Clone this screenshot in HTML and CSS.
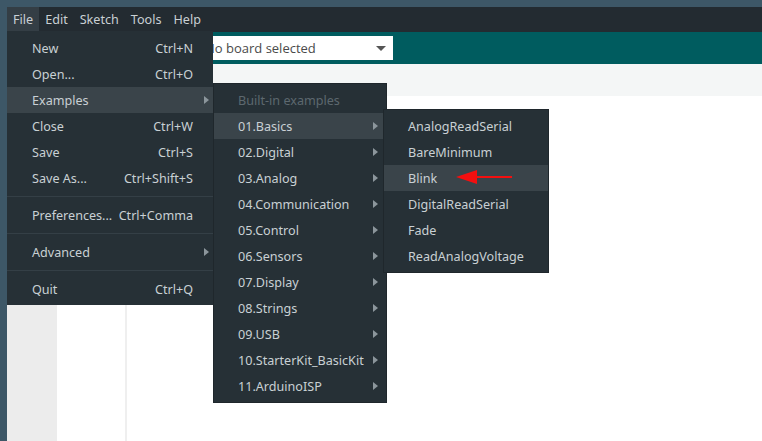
FILE: index.html
```html
<!DOCTYPE html>
<html>
<head>
<meta charset="utf-8">
<link rel="stylesheet" href="styles.css">
</head>
<body>
<div class="desk">
  <div class="window">
    <div class="menubar">
      <span class="mb-item active">File</span>
      <span class="mb-item">Edit</span>
      <span class="mb-item">Sketch</span>
      <span class="mb-item">Tools</span>
      <span class="mb-item">Help</span>
    </div>
    <div class="toolbar">
      <div class="board"><span class="board-text">No board selected</span><span class="caret"></span></div>
    </div>
    <div class="tabs"></div>
    <div class="editor">
      <div class="gutter"></div>
      <div class="fold"></div>
      <div class="divider"></div>
      <div class="code"></div>
    </div>
  </div>

  <div class="menu file-menu">
    <div class="row"><span>New</span><span class="key">Ctrl+N</span></div>
    <div class="row"><span>Open...</span><span class="key">Ctrl+O</span></div>
    <div class="row hl sub"><span>Examples</span></div>
    <div class="row"><span>Close</span><span class="key">Ctrl+W</span></div>
    <div class="row"><span>Save</span><span class="key">Ctrl+S</span></div>
    <div class="row"><span>Save As...</span><span class="key">Ctrl+Shift+S</span></div>
    <div class="sep"></div>
    <div class="row"><span>Preferences...</span><span class="key">Ctrl+Comma</span></div>
    <div class="sep"></div>
    <div class="row sub"><span>Advanced</span></div>
    <div class="sep"></div>
    <div class="row"><span>Quit</span><span class="key">Ctrl+Q</span></div>
  </div>

  <div class="menu ex-menu">
    <div class="row disabled"><span>Built-in examples</span></div>
    <div class="row hl sub"><span>01.Basics</span></div>
    <div class="row sub"><span>02.Digital</span></div>
    <div class="row sub"><span>03.Analog</span></div>
    <div class="row sub"><span>04.Communication</span></div>
    <div class="row sub"><span>05.Control</span></div>
    <div class="row sub"><span>06.Sensors</span></div>
    <div class="row sub"><span>07.Display</span></div>
    <div class="row sub"><span>08.Strings</span></div>
    <div class="row sub"><span>09.USB</span></div>
    <div class="row sub"><span>10.StarterKit_BasicKit</span></div>
    <div class="row sub"><span>11.ArduinoISP</span></div>
  </div>

  <div class="menu basics-menu">
    <div class="row"><span>AnalogReadSerial</span></div>
    <div class="row"><span>BareMinimum</span></div>
    <div class="row hl"><span>Blink</span></div>
    <div class="row"><span>DigitalReadSerial</span></div>
    <div class="row"><span>Fade</span></div>
    <div class="row"><span>ReadAnalogVoltage</span></div>
  </div>

  <svg class="pointer" width="60" height="16" viewBox="0 0 60 16">
    <polygon points="0,8 21,1 21,15" fill="#f40f0f"/>
    <rect x="20" y="7" width="36" height="2" fill="#f40f0f"/>
  </svg>
</div>
</body>
</html>
```
FILE: styles.css
```css
* { box-sizing: border-box; }
html, body { margin: 0; padding: 0; }
body {
  width: 762px;
  height: 441px;
  overflow: hidden;
  font-family: "Noto Sans", "Open Sans", sans-serif;
  font-size: 12.6px;
}
.desk {
  position: relative;
  width: 762px;
  height: 441px;
  background: #3d5767;
  padding: 7px 0 0 7px;
}
.window {
  display: flex;
  flex-direction: column;
  height: 434px;
  background: #fff;
}
.menubar {
  height: 25px;
  background: #232b31;
  display: flex;
  align-items: flex-start;
  color: #c9d0d4;
}
.mb-item {
  height: 24px;
  line-height: 23px;
  padding: 1px 6px 0;
}
.mb-item.active { background: #343e45; }
.toolbar {
  height: 32px;
  background: #005c5f;
  display: flex;
  align-items: flex-start;
  padding-top: 4px;
}
.board {
  margin-left: 189px;
  width: 197px;
  height: 24px;
  background: #fff;
  display: flex;
  align-items: center;
  justify-content: space-between;
  padding: 0 7px 0 9px;
  font-family: "Open Sans", "Noto Sans", sans-serif;
  font-size: 13px;
  color: #4a4a4a;
}
.caret {
  width: 0; height: 0;
  border-left: 5px solid transparent;
  border-right: 5px solid transparent;
  border-top: 5px solid #555;
  margin-top: 1px;
}
.tabs {
  height: 32px;
  background: #f4f6f6;
}
.editor {
  flex: 1;
  display: flex;
}
.gutter { width: 50px; background: #ececec; }
.fold { width: 68px; background: #fff; }
.divider { width: 2px; background: #efefef; }
.code { flex: 1; background: #fff; }

.menu {
  position: absolute;
  background: #263036;
  color: #c9d0d4;
  padding: 4px 0 3px;
}
.row {
  position: relative;
  height: 26px;
  line-height: 24px;
  display: flex;
  align-items: flex-start;
  justify-content: space-between;
  padding: 2px 20px 0 25px;
  white-space: nowrap;
}
.row.hl { background: #3a444a; }
.row.disabled { color: #5d686f; }
.row.sub::after {
  content: "";
  position: absolute;
  top: 9px;
  width: 0; height: 0;
  border-top: 4px solid transparent;
  border-bottom: 4px solid transparent;
  border-left: 5px solid #8c969c;
}
.sep {
  height: 1px;
  margin: 5px 0;
  background: #343f46;
}
.file-menu {
  left: 7px;
  top: 31px;
  width: 206px;
}
.file-menu .row.sub::after { right: 4px; }
.ex-menu {
  left: 213px;
  top: 83px;
  width: 174px;
  border: 1px solid #1f272c;
  padding: 3px 0 3px;
}
.ex-menu .row { padding-left: 24px; }
.ex-menu .row.sub::after { right: 8px; }
.basics-menu {
  left: 383px;
  top: 109px;
  width: 166px;
  border: 1px solid #1f272c;
  padding: 3px 0 3px;
}
.basics-menu .row { padding-left: 24px; }
.pointer {
  position: absolute;
  left: 456px;
  top: 169px;
}
```
